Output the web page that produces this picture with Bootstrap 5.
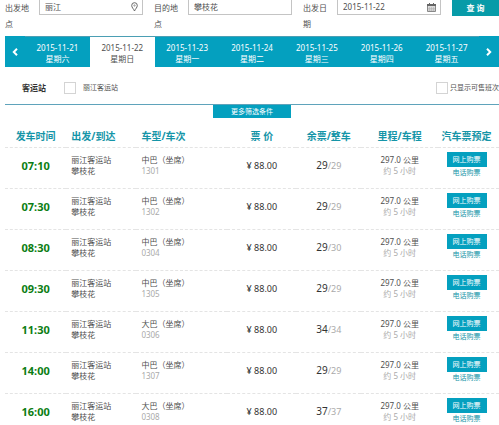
<!DOCTYPE html>
<html lang="zh-CN">
<head>
<meta charset="utf-8">
<meta name="viewport" content="width=device-width, initial-scale=1">
<title>汽车票查询</title>
<link href="https://cdn.jsdelivr.net/npm/bootstrap@5.3.0/dist/css/bootstrap.min.css" rel="stylesheet">
<style>
:root { --teal: #04a0bf; scrollbar-width: none; }
body { font: 8px/16px "Noto Sans", "Noto Sans CJK SC", sans-serif; color: #505050; background: #fff; overflow-x: hidden; }
.page { padding-left: 5px; }
.search { gap: 11px; height: 36px; }
.field { flex: 1 1 0; gap: 10px; min-width: 0; }
.field label { width: 24px; flex: none; }
.box { height: 15px; border: 1px solid #c4c4c4; border-top: 0; padding: 0 4px 0 5px; }
.box input { font-size: 8px; line-height: 14px; height: 14px; color: #505050; min-width: 0; outline: 0; }
.go { width: 47px; height: 16px; background: #079ba8; font-size: 8px; line-height: 16px; }
.days { background: var(--teal); line-height: 11px; height: 31px; }
.days .arrow { width: 20px; }
.day { flex: 1 1 0; color: #fff; border-top: 1px solid #4b9fb4; padding-top: 5px; }
.day.active { background: #fff; color: #505050; }
.filters { height: 38px; padding: 5px 0 0 17px; border-bottom: 1px solid #5fa3bb; }
.filters strong { width: 42px; color: #333; }
.filters input { appearance: none; width: 12px; height: 12px; border: 1px solid #d4d4d4; background: #fff; }
.filters input:checked { background: var(--teal); }
.station { gap: 7px; font-size: 7px; }
.sellable { gap: 2px; font-size: 7px; }
.more { width: 78px; height: 13px; background: var(--teal); font-size: 7px; line-height: 13px; }
.trips { table-layout: fixed; line-height: 11px; }
.trips th { height: 29px; padding: 9px 0 0; font-size: 10px; color: #1595a8; white-space: nowrap; }
.trips td { height: 41px; padding: 0 0 5px; border-top: 1px dashed #e4e4e4; vertical-align: middle; white-space: nowrap; }
.trips .start { text-align: left; padding-left: 5px; }
.trips .last { padding-right: 4px; }
.trips .time { font-size: 11px; color: #0b7d12; padding-bottom: 4px; }
.price { font-size: 9px; color: #333; }
.left { font-size: 10px; color: #333; }
.left small { font-size: 9px; }
.dim { color: #aaa; }
.buy { width: 40px; height: 15px; background: var(--teal); font-size: 7px; line-height: 15px; }
.phone { font-size: 7px; color: #1595a8; }
</style>
<script src="https://cdn.jsdelivr.net/npm/bootstrap@5.3.0/dist/js/bootstrap.bundle.min.js"></script>
</head>
<body>
<main class="page">
  <form class="search d-flex align-items-start">
    <div class="field d-flex">
      <label for="from">出发地点</label>
      <div class="box d-flex align-items-center flex-grow-1 overflow-hidden">
        <input id="from" class="border-0 p-0 w-100 bg-transparent" value="丽江">
        <svg class="flex-shrink-0" width="7" height="10" viewBox="0 0 7 10" fill="none" stroke="#666"><path d="M3.500 9C2.700 7 .7 5.500 .7 3.500a2.800 2.800 0 0 1 5.600 0C6.300 5.500 4.300 7 3.500 9Z"/><circle cx="3.500" cy="3.500" r=".7" stroke-width=".6"/></svg>
      </div>
    </div>
    <div class="field d-flex">
      <label for="to">目的地点</label>
      <div class="box d-flex align-items-center flex-grow-1 overflow-hidden">
        <input id="to" class="border-0 p-0 w-100 bg-transparent" value="攀枝花">
      </div>
    </div>
    <div class="field d-flex">
      <label for="date">出发日期</label>
      <div class="box d-flex align-items-center flex-grow-1 overflow-hidden">
        <input id="date" class="border-0 p-0 w-100 bg-transparent" value="2015-11-22">
        <svg class="flex-shrink-0" width="9" height="9" viewBox="0 0 9 9"><path d="M.5 1.500h8v7h-8z" fill="#ddd" stroke="#888"/><path d="M0 1h9v2H0zM2 0h1v2H2zM6 0h1v2H6z" fill="#666"/><path d="M2.500 4v4M4.500 4v4M6.500 4v4M1 5.500h7M1 7h7" stroke="#aaa" stroke-width=".5"/></svg>
      </div>
    </div>
    <button type="button" class="go btn border-0 rounded-0 p-0 text-white fw-bold">查 询</button>
  </form>

  <nav class="days d-flex text-center" aria-label="日期">
    <button type="button" class="arrow btn border-0 p-0 d-flex align-items-center justify-content-center" aria-label="前一天"><svg width="6" height="8" viewBox="0 0 6 8" fill="none" stroke="#fff" stroke-width="2"><path d="M5 .8 1.800 4 5 7.200"/></svg></button>
    <a href="#" class="day text-decoration-none">2015-11-21<br>星期六</a>
    <a href="#" class="day active text-decoration-none" aria-current="date">2015-11-22<br>星期日</a>
    <a href="#" class="day text-decoration-none">2015-11-23<br>星期一</a>
    <a href="#" class="day text-decoration-none">2015-11-24<br>星期二</a>
    <a href="#" class="day text-decoration-none">2015-11-25<br>星期三</a>
    <a href="#" class="day text-decoration-none">2015-11-26<br>星期四</a>
    <a href="#" class="day text-decoration-none">2015-11-27<br>星期五</a>
    <button type="button" class="arrow btn border-0 p-0 d-flex align-items-center justify-content-center" aria-label="后一天"><svg width="6" height="8" viewBox="0 0 6 8" fill="none" stroke="#fff" stroke-width="2"><path d="M1 .8 4.200 4 1 7.200"/></svg></button>
  </nav>

  <div class="filters d-flex align-items-center">
    <strong>客运站</strong>
    <label class="station d-flex align-items-center"><input type="checkbox" class="flex-shrink-0">丽江客运站</label>
    <label class="sellable d-flex align-items-center ms-auto text-nowrap"><input type="checkbox" class="flex-shrink-0">只显示可售班次</label>
  </div>
  <button type="button" class="more btn d-block border-0 rounded-0 p-0 mx-auto text-white">更多筛选条件</button>

  <table class="trips w-100 text-center">
    <colgroup><col style="width:12.4%"><col style="width:14.2%"><col style="width:18.4%"><col style="width:14%"><col style="width:13.1%"><col style="width:15.6%"><col style="width:12.3%"></colgroup>
    <thead><tr><th>发车时间</th><th class="start">出发/到达</th><th class="start">车型/车次</th><th>票 价</th><th>余票/整车</th><th>里程/车程</th><th class="last">汽车票预定</th></tr></thead>
    <tbody>
      <tr><td class="time fw-bold">07:10</td><td class="start">丽江客运站<br>攀枝花</td><td class="start">中巴（坐席）<br><span class="dim">1301</span></td><td class="price">¥ 88.00</td><td class="left">29<small class="dim">/29</small></td><td>297.0 公里<br><span class="dim">约 5 小时</span></td><td class="last"><button type="button" class="buy btn d-block mx-auto border-0 rounded-0 p-0 text-white">网上购票</button><a href="#" class="phone d-block text-decoration-none">电话购票</a></td></tr>
      <tr><td class="time fw-bold">07:30</td><td class="start">丽江客运站<br>攀枝花</td><td class="start">中巴（坐席）<br><span class="dim">1302</span></td><td class="price">¥ 88.00</td><td class="left">29<small class="dim">/29</small></td><td>297.0 公里<br><span class="dim">约 5 小时</span></td><td class="last"><button type="button" class="buy btn d-block mx-auto border-0 rounded-0 p-0 text-white">网上购票</button><a href="#" class="phone d-block text-decoration-none">电话购票</a></td></tr>
      <tr><td class="time fw-bold">08:30</td><td class="start">丽江客运站<br>攀枝花</td><td class="start">中巴（坐席）<br><span class="dim">0304</span></td><td class="price">¥ 88.00</td><td class="left">29<small class="dim">/30</small></td><td>297.0 公里<br><span class="dim">约 5 小时</span></td><td class="last"><button type="button" class="buy btn d-block mx-auto border-0 rounded-0 p-0 text-white">网上购票</button><a href="#" class="phone d-block text-decoration-none">电话购票</a></td></tr>
      <tr><td class="time fw-bold">09:30</td><td class="start">丽江客运站<br>攀枝花</td><td class="start">中巴（坐席）<br><span class="dim">1305</span></td><td class="price">¥ 88.00</td><td class="left">29<small class="dim">/29</small></td><td>297.0 公里<br><span class="dim">约 5 小时</span></td><td class="last"><button type="button" class="buy btn d-block mx-auto border-0 rounded-0 p-0 text-white">网上购票</button><a href="#" class="phone d-block text-decoration-none">电话购票</a></td></tr>
      <tr><td class="time fw-bold">11:30</td><td class="start">丽江客运站<br>攀枝花</td><td class="start">大巴（坐席）<br><span class="dim">0306</span></td><td class="price">¥ 88.00</td><td class="left">34<small class="dim">/34</small></td><td>297.0 公里<br><span class="dim">约 5 小时</span></td><td class="last"><button type="button" class="buy btn d-block mx-auto border-0 rounded-0 p-0 text-white">网上购票</button><a href="#" class="phone d-block text-decoration-none">电话购票</a></td></tr>
      <tr><td class="time fw-bold">14:00</td><td class="start">丽江客运站<br>攀枝花</td><td class="start">中巴（坐席）<br><span class="dim">1307</span></td><td class="price">¥ 88.00</td><td class="left">29<small class="dim">/29</small></td><td>297.0 公里<br><span class="dim">约 5 小时</span></td><td class="last"><button type="button" class="buy btn d-block mx-auto border-0 rounded-0 p-0 text-white">网上购票</button><a href="#" class="phone d-block text-decoration-none">电话购票</a></td></tr>
      <tr><td class="time fw-bold">16:00</td><td class="start">丽江客运站<br>攀枝花</td><td class="start">大巴（坐席）<br><span class="dim">0308</span></td><td class="price">¥ 88.00</td><td class="left">37<small class="dim">/37</small></td><td>297.0 公里<br><span class="dim">约 5 小时</span></td><td class="last"><button type="button" class="buy btn d-block mx-auto border-0 rounded-0 p-0 text-white">网上购票</button><a href="#" class="phone d-block text-decoration-none">电话购票</a></td></tr>
    </tbody>
  </table>
</main>
</body>
</html>
